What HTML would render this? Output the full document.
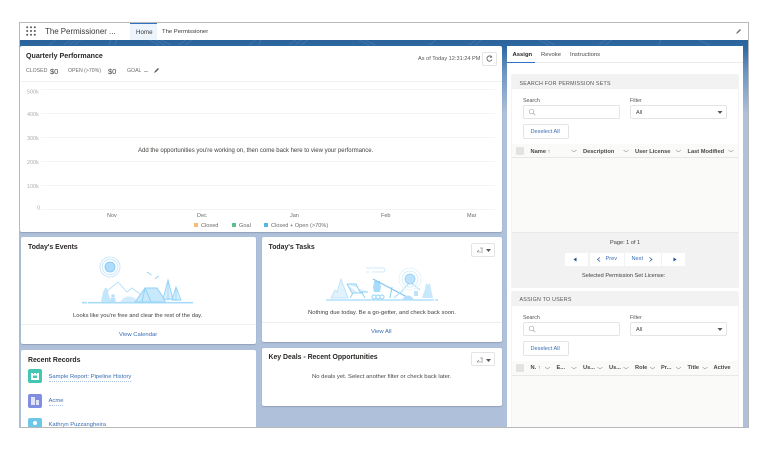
<!DOCTYPE html>
<html><head><meta charset="utf-8"><style>
html,body{margin:0;padding:0;background:#fff}
body{width:768px;height:460px;position:relative;overflow:hidden;font-family:"Liberation Sans",sans-serif;color:#3e3e3c}
#w{position:absolute;left:0;top:0;width:768px;height:460px;filter:blur(.3px)}
.a{position:absolute}
.t{position:absolute;white-space:nowrap;line-height:1;margin-top:1px}
.card{position:absolute;background:#fff;border-radius:2px;box-shadow:0 1px 1px rgba(90,100,120,.35)}
.h{font-weight:bold;font-size:6.9px;color:#2b2826}
.link{color:#3a6cb5}
.btn{position:absolute;background:#fff;border:1px solid #e5e4e2;border-radius:2px;box-sizing:border-box}
.th{position:absolute;font-size:5.7px;font-weight:bold;color:#4a4846;white-space:nowrap;line-height:1;margin-top:1px}
</style></head><body><div id="w">
<div class="a" style="left:19px;top:22px;width:730px;height:405px;box-sizing:border-box;overflow:hidden;background:#afc1da">
<div class="a" style="left:0;top:17px;width:730px;height:75px;background:linear-gradient(#2a6299 0,#2f6aa3 12%,#6d96c2 45%,#afc1da 100%)"></div>
<svg class="a" style="left:0;top:17px" width="730" height="7"><g stroke="#5c8cbc" stroke-width=".5" fill="none" opacity=".8"><path d="M30 6l8-6M45 6l8-6M50 6l8-6M55 6l8-6M90 6l2-6M96 6l2-6M130 1l10 5M136 1l10 5M142 1l10 5M160 6l8-6M166 6l8-6M230 6l8-6M240 6l2-6M270 6l8-6M276 6l8-6M282 6l8-6M340 1l10 5M346 1l10 5M410 6l8-6M450 6l8-6M456 6l8-6M520 1l10 5M526 1l10 5M580 6l8-6M586 6l8-6M640 6l2-6M680 1l10 5"/></g></svg>
<div class="a" style="left:0;top:0;width:730px;height:17.500px;background:#fff"></div>
</div>
<!-- header -->
<svg class="a" style="left:26px;top:26px" width="10" height="10"><g fill="#55575a"><circle cx="1.200" cy="1.200" r="1"/><circle cx="5" cy="1.200" r="1"/><circle cx="8.800" cy="1.200" r="1"/><circle cx="1.200" cy="5" r="1"/><circle cx="5" cy="5" r="1"/><circle cx="8.800" cy="5" r="1"/><circle cx="1.200" cy="8.800" r="1"/><circle cx="5" cy="8.800" r="1"/><circle cx="8.800" cy="8.800" r="1"/></g></svg>
<div class="t" style="left:45px;top:27px;font-size:7.900px;color:#3a3836">The Permissioner ...</div>
<div class="a" style="left:130px;top:23px;width:27px;height:16.500px;background:#eef4fb;border-top:1px solid #2f72c4;box-sizing:border-box"></div>
<div class="t" style="left:136px;top:28.500px;font-size:6.200px;color:#3a3836">Home</div>
<div class="t" style="left:162px;top:28.500px;font-size:5.900px;color:#3a3836">The Permissioner</div>
<svg class="a" style="left:735px;top:28px" width="7" height="7"><path d="M1 6l1-2 3-3 1 1-3 3z" fill="#6b6d70"/></svg>

<!-- chart card -->
<div class="card" style="left:20px;top:46px;width:482px;height:186px"></div>
<div class="t h" style="left:26px;top:51.500px;font-size:7.100px">Quarterly Performance</div>
<div class="t" style="left:26px;top:68px;font-size:5.200px;color:#6b6d70">CLOSED</div>
<div class="t" style="left:50px;top:66.500px;font-size:7.500px">$0</div>
<div class="t" style="left:68px;top:68px;font-size:5.200px;color:#6b6d70">OPEN (&gt;70%)</div>
<div class="t" style="left:108px;top:66.500px;font-size:7.500px">$0</div>
<div class="t" style="left:127px;top:68px;font-size:5.200px;color:#6b6d70">GOAL</div>
<div class="t" style="left:144px;top:67.500px;font-size:6px">--</div>
<svg class="a" style="left:153px;top:67px" width="7" height="7"><path d="M1 6l1-2 3-3 1 1-3 3z" fill="#55575a"/></svg>
<div class="t" style="left:418px;top:55.500px;font-size:5.600px;color:#55575a">As of Today 12:31:24 PM</div>
<div class="btn" style="left:482px;top:52px;width:15px;height:14px"></div>
<svg class="a" style="left:486px;top:55px" width="7" height="7" fill="none" stroke="#55575a" stroke-width=".8"><path d="M5.500 1.800A2.600 2.600 0 1 0 6 4.500"/><path d="M4.500 .6l1.200 1.300-1.600.6"/></svg>
<div class="a" style="left:21px;top:81px;width:481px;height:1px;background:#f0f0ef"></div>
<svg class="a" style="left:20px;top:86px" width="482" height="135" font-family="Liberation Sans" font-size="5.500" fill="#b0afad">
<g stroke="#f4f4f3" stroke-width="1"><path d="M21 3.500H475M21 27.500H475M21 51.500H475M21 75.500H475M21 99.500H475M21 123.500H475"/><path d="M92 123v3M181 123v3M274 123v3M366 123v3M452 123v3"/></g>
<text x="7" y="7.500">500k</text><text x="7" y="30">400k</text><text x="7" y="54">300k</text><text x="7" y="78">200k</text><text x="7" y="102">100k</text><text x="17" y="123.500">0</text>
<g fill="#6b6b6a" font-size="5.500"><text x="87" y="131">Nov</text><text x="177" y="131">Dec</text><text x="270" y="131">Jan</text><text x="361" y="131">Feb</text><text x="447" y="131">Mar</text></g>
</svg>
<div class="t" style="left:138px;top:147px;font-size:6px;color:#3e3e3c">Add the opportunities you're working on, then come back here to view your performance.</div>
<div class="a" style="left:194px;top:223px;width:4px;height:4px;background:#f7bc74"></div>
<div class="t" style="left:201px;top:222.500px;font-size:5.600px;color:#6b6b6a">Closed</div>
<div class="a" style="left:232px;top:223px;width:4px;height:4px;background:#5cc08a"></div>
<div class="t" style="left:239px;top:222.500px;font-size:5.600px;color:#6b6b6a">Goal</div>
<div class="a" style="left:264px;top:223px;width:4px;height:4px;background:#56b6e0"></div>
<div class="t" style="left:271px;top:222.500px;font-size:5.600px;color:#6b6b6a">Closed + Open (&gt;70%)</div>

<!-- events -->
<div class="card" style="left:21px;top:237px;width:235px;height:107px"></div>
<div class="t h" style="left:28px;top:243.500px">Today's Events</div>
<svg class="a" style="left:70px;top:250px" width="130" height="60" fill="none">
<circle cx="40" cy="17" r="10" stroke="#bfe2fa" stroke-width=".8"/><circle cx="40" cy="17" r="7.800" stroke="#bfe2fa" stroke-width=".8"/><circle cx="40" cy="17" r="5" fill="#aedcfa" stroke="#7fc6f3" stroke-width=".8"/>
<path d="M12 52.700h5M18 52.700h105" stroke="#a8dcfb" stroke-width="1.600"/>
<path d="M31 52l2-10 2-4h2l1 4 3 10z" fill="#c4e6fb"/>
<path d="M36 42l12-10 9 10 5-4 8 6" stroke="#b5e0fa" stroke-width=".9"/>
<circle cx="43" cy="46" r="1.900" fill="#bfe2fa"/><path d="M40.500 52h5v-4h-5z" fill="#bfe2fa"/>
<path d="M50 52c4-7 13-8 18 0z" fill="#d3ecfc"/>
<path d="M65 52l10-14h12l8 12v2z" fill="#c8e8fb" stroke="#92d2f8" stroke-width="1"/><path d="M75 38l-3 14M75 38l6 14" stroke="#92d2f8" stroke-width="1"/>
<path d="M98 30l-5 19h10zM106 37l-4 13h9z" fill="#d7eefc" stroke="#92d2f8" stroke-width=".9"/><path d="M98 30v21M106 37v14" stroke="#92d2f8" stroke-width=".7"/>
<path d="M77 22l3 2 1.500 1M85 29l2-2 2-1" stroke="#92d2f8" stroke-width=".9"/>
</svg>
<div class="t" style="left:73px;top:312.500px;font-size:5.800px;color:#3e3e3c">Looks like you're free and clear the rest of the day.</div>
<div class="a" style="left:21px;top:324px;width:235px;height:1px;background:#efefee"></div>
<div class="t link" style="left:119px;top:331.500px;font-size:5.900px">View Calendar</div>

<!-- recent records -->
<div class="a" style="left:21px;top:350px;width:235px;height:77px;background:#fff;overflow:hidden;border-radius:2px 2px 0 0"></div>
<div class="t h" style="left:28px;top:356.500px">Recent Records</div>
<div class="a" style="left:28px;top:369px;width:14px;height:14px;background:#45c6b2;border-radius:2px"></div>
<svg class="a" style="left:31px;top:372px" width="8" height="8"><path d="M0 1h8v7H0z" fill="#fff"/><path d="M2 3.500h4v2.500H2zM2 0h1v2H2zM5 0h1v2H5z" fill="#45c6b2"/></svg>
<div class="t link" style="left:48.500px;top:373.500px;font-size:5.850px;border-bottom:1px dotted #a9c3e6;padding-bottom:.5px">Sample Report: Pipeline History</div>
<div class="a" style="left:28px;top:394px;width:14px;height:14px;background:#7f8ee0;border-radius:2px"></div>
<div class="a" style="left:31px;top:397px;width:4px;height:8px;background:#dfe3f8"></div><div class="a" style="left:35.500px;top:400px;width:3.500px;height:5px;background:#dfe3f8"></div>
<div class="t link" style="left:48.500px;top:398px;font-size:5.850px;border-bottom:1px dotted #a9c3e6;padding-bottom:.5px">Acme</div>
<div class="a" style="left:28px;top:418px;width:14px;height:9px;background:#6cc8e6;border-radius:2px 2px 0 0;overflow:hidden"><div class="a" style="left:5px;top:3px;width:4px;height:4px;border-radius:50%;background:#fff"></div></div>
<div class="a" style="left:48px;top:420px;height:7px;overflow:hidden;width:80px"><div class="t link" style="left:.5px;top:1.500px;font-size:5.850px">Kathryn Puzzangheira</div></div>

<!-- tasks -->
<div class="card" style="left:262px;top:237px;width:240px;height:105px"></div>
<div class="t h" style="left:268.500px;top:243.500px">Today's Tasks</div>
<div class="btn" style="left:471px;top:243px;width:24px;height:14px"></div>
<svg class="a" style="left:476px;top:246px" width="15" height="8" fill="none" stroke="#7b7b7a" stroke-width=".6"><path d="M1 6l2-2M1 6h4M6 2v5M4 2h3"/><path d="M10 3h5l-2.500 3z" fill="#55575a" stroke="none"/></svg>
<svg class="a" style="left:320px;top:255px" width="130" height="55" fill="none">
<path d="M46 13h17a2 2 0 0 1 0 4H52M46 17h3" stroke="#d0ebfc" stroke-width="1"/>
<path d="M6 45h108M115 45h3" stroke="#a2daf9" stroke-width="1.200"/>
<path d="M11 43l4-8 2 2 4-13 7 19z" fill="#e1f2fd" stroke="#b5e0fa" stroke-width=".8"/>
<path d="M27 29h9l4 8h8M27 29l5 9h6" fill="#d7eefc" stroke="#92d2f8" stroke-width="1"/><path d="M33 38l-3 5M42 38l3 5M33 38h10" stroke="#92d2f8" stroke-width="1"/>
<circle cx="54" cy="42" r="2" stroke="#92d2f8"/><circle cx="58" cy="42" r="2" stroke="#92d2f8"/><circle cx="62" cy="42" r="2" stroke="#92d2f8"/>
<path d="M54 26h6v2l1 4-1 5h-6l-1-5 1-4z" fill="#a8dcfb"/>
<path d="M53 24l34 18" stroke="#7fc6f3" stroke-width="1.200"/><path d="M72 32l-2 11" stroke="#7fc6f3" stroke-width=".9"/>
<path d="M74 43l8-7 8-9 10 8" stroke="#a8dcfb"/>
<circle cx="90" cy="24" r="5" fill="#bfe2fa" stroke="#92d2f8" stroke-width=".8"/><circle cx="90" cy="24" r="8" stroke="#d7eefc"/><circle cx="90" cy="24" r="11" stroke="#e6f4fd"/>
<path d="M82 45c3-6 9-6 12 0z" fill="#b5e0fa"/>
<path d="M94 36h4v5h-4z" fill="#bfe2fa"/><path d="M102 43l3-9 1-6 2 2 2-2 1 6 2 9z" fill="#c8e8fb"/>
</svg>
<div class="t" style="left:308px;top:310px;font-size:5.900px;color:#3e3e3c">Nothing due today. Be a go-getter, and check back soon.</div>
<div class="a" style="left:262px;top:322px;width:240px;height:1px;background:#efefee"></div>
<div class="t link" style="left:371px;top:329px;font-size:5.900px">View All</div>

<!-- key deals -->
<div class="card" style="left:262px;top:348px;width:240px;height:58px"></div>
<div class="t h" style="left:268.500px;top:353.500px">Key Deals - Recent Opportunities</div>
<div class="btn" style="left:471px;top:352px;width:24px;height:14px"></div>
<svg class="a" style="left:476px;top:356px" width="15" height="8" fill="none" stroke="#7b7b7a" stroke-width=".6"><path d="M1 6l2-2M1 6h4M6 2v5M4 2h3"/><path d="M10 3h5l-2.500 3z" fill="#55575a" stroke="none"/></svg>
<div class="t" style="left:312px;top:373.500px;font-size:5.900px;color:#4a4846">No deals yet. Select another filter or check back later.</div>

<!-- right panel -->
<div class="a" style="left:507px;top:46px;width:236px;height:381px;background:#fff"></div>
<div class="t" style="left:512.500px;top:51.500px;font-size:5.900px;font-weight:bold;color:#2b2826">Assign</div>
<div class="t" style="left:541px;top:51.500px;font-size:5.900px;color:#4a4846">Revoke</div>
<div class="t" style="left:570px;top:51.500px;font-size:5.900px;color:#4a4846">Instructions</div>
<div class="a" style="left:507px;top:62px;width:236px;height:1px;background:#ecebea"></div>
<div class="a" style="left:507px;top:61.500px;width:28px;height:1.200px;background:#2f72c4"></div>

<!-- sec 1 -->
<div class="a" style="left:512px;top:75px;width:226px;height:212px;background:#fff;box-shadow:0 0 0 .5px #e8e7e6"></div>
<div class="a" style="left:512px;top:75px;width:226px;height:14px;background:#f3f2f2"></div>
<div class="t" style="left:519.500px;top:80.500px;font-size:5.300px;letter-spacing:.25px;color:#55534f">SEARCH FOR PERMISSION SETS</div>
<div class="t" style="left:523px;top:97.500px;font-size:5.300px;color:#55534f">Search</div>
<div class="btn" style="left:523px;top:105px;width:97px;height:14px"></div>
<svg class="a" style="left:528px;top:108px" width="8" height="8" fill="none" stroke="#a6a5a3" stroke-width=".7"><circle cx="3.500" cy="3.500" r="2.300"/><path d="M5.200 5.200l2 2"/></svg>
<div class="t" style="left:630px;top:97.500px;font-size:5.300px;color:#55534f">Filter</div>
<div class="btn" style="left:630px;top:105px;width:97px;height:14px"></div>
<div class="t" style="left:636px;top:109.500px;font-size:5.500px;color:#3e3e3c">All</div>
<svg class="a" style="left:717px;top:110px" width="6" height="5"><path d="M.5 1h5L3 4z" fill="#55575a"/></svg>
<div class="btn" style="left:523px;top:124px;width:46px;height:14.500px"></div>
<div class="t link" style="left:530.500px;top:128.500px;font-size:5.600px">Deselect All</div>
<div class="a" style="left:512px;top:144px;width:226px;height:14px;background:#fafaf9;border-bottom:1px solid #e8e7e6;box-sizing:border-box"></div>
<div class="a" style="left:516px;top:147px;width:8px;height:8px;background:#e4e3e2;border-radius:1px"></div>
<div class="th" style="left:530.500px;top:148.500px">Name ↑</div>
<div class="th" style="left:583px;top:148.500px">Description</div>
<div class="th" style="left:635px;top:148.500px">User License</div>
<div class="th" style="left:687.500px;top:148.500px">Last Modified</div>
<svg class="a" style="left:512px;top:144px" width="226" height="14" fill="none" stroke="#706e6b" stroke-width=".5"><path d="M59.500 6l2.500 2 2.500-2M111.500 6l2.500 2 2.500-2M164 6l2.500 2 2.500-2M216.500 6l2.500 2 2.500-2"/></svg>
<div class="a" style="left:512px;top:158px;width:226px;height:74px;background:#fafaf9"></div>
<div class="a" style="left:512px;top:232px;width:226px;height:55px;background:#f3f2f2;border-top:1px solid #e8e7e6;box-sizing:border-box"></div>
<div class="t" style="left:610px;top:240px;font-size:5.600px;color:#3e3e3c">Page: 1 of 1</div>
<div class="a" style="left:565px;top:253px;width:23px;height:12.500px;background:#fff"></div>
<div class="a" style="left:590px;top:253px;width:34px;height:12.500px;background:#fff"></div>
<div class="a" style="left:625px;top:253px;width:36px;height:12.500px;background:#fff"></div>
<div class="a" style="left:662px;top:253px;width:23px;height:12.500px;background:#fff"></div>
<svg class="a" style="left:565px;top:253px" width="121" height="13"><path d="M8.500 6.500l3-2v4zM108.500 4.500l3 2-3 2z" fill="#1b4f96"/><path d="M35 4.500l-2.500 2 2.500 2M84.500 4.500l2.500 2-2.500 2" stroke="#1b4f96" stroke-width=".7" fill="none"/></svg>
<div class="t link" style="left:605.500px;top:256px;font-size:5.600px">Prev</div>
<div class="t link" style="left:631.500px;top:256px;font-size:5.600px">Next</div>
<div class="t" style="left:582px;top:272.500px;font-size:5.600px;color:#3e3e3c">Selected Permission Set License:</div>

<!-- sec 2 -->
<div class="a" style="left:512px;top:292px;width:226px;height:135px;background:#fff;box-shadow:0 0 0 .5px #e8e7e6"></div>
<div class="a" style="left:512px;top:292px;width:226px;height:14px;background:#f3f2f2"></div>
<div class="t" style="left:519.500px;top:297px;font-size:5.300px;letter-spacing:.25px;color:#55534f">ASSIGN TO USERS</div>
<div class="t" style="left:523px;top:314.500px;font-size:5.300px;color:#55534f">Search</div>
<div class="btn" style="left:523px;top:322px;width:97px;height:14px"></div>
<svg class="a" style="left:528px;top:325px" width="8" height="8" fill="none" stroke="#a6a5a3" stroke-width=".7"><circle cx="3.500" cy="3.500" r="2.300"/><path d="M5.200 5.200l2 2"/></svg>
<div class="t" style="left:630px;top:314.500px;font-size:5.300px;color:#55534f">Filter</div>
<div class="btn" style="left:630px;top:322px;width:97px;height:14px"></div>
<div class="t" style="left:636px;top:326.500px;font-size:5.500px;color:#3e3e3c">All</div>
<svg class="a" style="left:717px;top:327px" width="6" height="5"><path d="M.5 1h5L3 4z" fill="#55575a"/></svg>
<div class="btn" style="left:523px;top:341px;width:46px;height:14.500px"></div>
<div class="t link" style="left:530.500px;top:345.500px;font-size:5.600px">Deselect All</div>
<div class="a" style="left:512px;top:361px;width:226px;height:14.500px;background:#fafaf9;border-bottom:1px solid #e8e7e6;box-sizing:border-box"></div>
<div class="a" style="left:516px;top:364px;width:8px;height:8px;background:#e4e3e2;border-radius:1px"></div>
<div class="th" style="left:530.500px;top:365px">N. ↑</div>
<div class="th" style="left:556.500px;top:365px">E...</div>
<div class="th" style="left:583px;top:365px">Us...</div>
<div class="th" style="left:609px;top:365px">Us...</div>
<div class="th" style="left:635px;top:365px">Role</div>
<div class="th" style="left:661px;top:365px">Pr...</div>
<div class="th" style="left:687.500px;top:365px">Title</div>
<div class="th" style="left:713.500px;top:365px">Active</div>
<svg class="a" style="left:512px;top:361px" width="226" height="15" fill="none" stroke="#706e6b" stroke-width=".5"><path d="M33 6l2.500 2 2.500-2M59.500 6l2.500 2 2.500-2M85.500 6l2.500 2 2.500-2M111.500 6l2.500 2 2.500-2M138 6l2.500 2 2.500-2M164 6l2.500 2 2.500-2M190.500 6l2.500 2 2.500-2"/></svg>
<div class="a" style="left:512px;top:376px;width:226px;height:51px;background:#fafaf9"></div>

<div class="a" style="left:19px;top:22px;width:730px;height:405.500px;box-sizing:border-box;border:1px solid #b9b9b9"></div>
</div></body></html>
